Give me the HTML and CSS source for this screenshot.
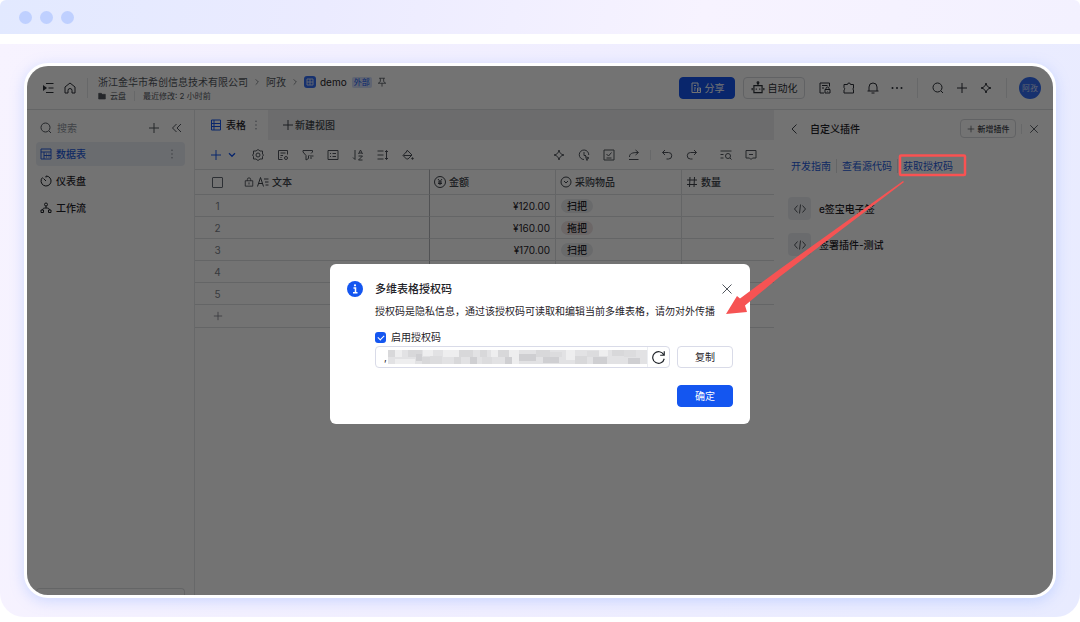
FILE: index.html
```html
<!DOCTYPE html>
<html lang="zh-CN">
<head>
    <meta charset="UTF-8">
    <meta name="viewport" content="width=device-width, initial-scale=1.0">
    <title>多维表格授权码</title>
    <link rel="stylesheet" href="styles.css">
</head>
<body>
    <!-- Icon set -->
    <svg class="sprite" aria-hidden="true">
        <symbol id="i-menu" viewBox="0 0 24 24"><path d="M8 3h15M13 12h10M8 21h15"/><path d="M2 6l8 6-8 6z" fill="currentColor" stroke="none"/></symbol>
        <symbol id="i-home" viewBox="0 0 24 24"><path d="M2 10l10-8 10 8v12h-6v-5a4 4 0 0 0-8 0v5H2z"/></symbol>
        <symbol id="i-right" viewBox="0 0 24 24"><path d="M8 4l8 8-8 8"/></symbol>
        <symbol id="i-left" viewBox="0 0 24 24"><path d="M17 3l-9 9 9 9"/></symbol>
        <symbol id="i-down" viewBox="0 0 24 24"><path d="M3 7l9 9 9-9" stroke-width="4"/></symbol>
        <symbol id="i-collapse" viewBox="0 0 24 24"><path d="M11 4l-8 8 8 8M20 4l-8 8 8 8"/></symbol>
        <symbol id="i-folder" viewBox="0 0 24 24"><path d="M2 4h8l3 3h9v14H2z" fill="currentColor"/></symbol>
        <symbol id="i-pin" viewBox="0 0 24 24"><path d="M5 3h14M8 3v8l-5 4h18l-5-4V3M12 15v8"/></symbol>
        <symbol id="i-share" viewBox="0 0 24 24"><path d="M15 21H4V2h12v7M8 7h4M8 12h4M8 16h3M15 12h6v9h-6zM15 16h6"/></symbol>
        <symbol id="i-robot" viewBox="0 0 24 24"><path d="M5 8h14v12H5zM12 3v5M2 12v4M22 12v4M9 13v2M15 13v2"/><circle cx="12" cy="3" r="1.500"/></symbol>
        <symbol id="i-doclock" viewBox="0 0 24 24"><path d="M10 22H2V2h19v7M6 7h11M6 12h4M12 15h10v7H12zM14 15v-2a3 3 0 0 1 6 0v2M17 18v1"/></symbol>
        <symbol id="i-puzzle" viewBox="0 0 24 24"><path d="M2 5h7a3 3 0 0 1 6 0h6v7a2.500 2.500 0 0 0 0 4v6H2v-6a3 3 0 0 0 0-5z"/></symbol>
        <symbol id="i-bell" viewBox="0 0 24 24"><path d="M4 18v-8a8 8 0 0 1 16 0v8M1 18h22M9 22h6"/></symbol>
        <symbol id="i-more" viewBox="0 0 24 24"><g fill="currentColor" stroke="none"><circle cx="3" cy="12" r="2"/><circle cx="12" cy="12" r="2"/><circle cx="21" cy="12" r="2"/></g></symbol>
        <symbol id="i-dots" viewBox="0 0 24 24"><g fill="currentColor" stroke="none"><circle cx="12" cy="3" r="2"/><circle cx="12" cy="12" r="2"/><circle cx="12" cy="21" r="2"/></g></symbol>
        <symbol id="i-search" viewBox="0 0 24 24"><circle cx="11" cy="11" r="9"/><path d="M18 18l4 4"/></symbol>
        <symbol id="i-plus" viewBox="0 0 24 24"><path d="M12 2v20M2 12h20"/></symbol>
        <symbol id="i-spark" viewBox="0 0 24 24"><path d="M12 2c1 6 4 9 10 10-6 1-9 4-10 10-1-6-4-9-10-10 6-1 9-4 10-10z"/></symbol>
        <symbol id="i-close" viewBox="0 0 24 24"><path d="M3 3l18 18M21 3L3 21"/></symbol>
        <symbol id="i-base" viewBox="0 0 24 24"><path d="M2 2h20v20H2zM2 8h20M8 8v14M8 15h14M12 12h2M17 12h2M12 18h2M17 18h2"/></symbol>
        <symbol id="i-table" viewBox="0 0 24 24"><path d="M3 2h18v20H3zM8 2v20M3 9h18M3 15h18"/></symbol>
        <symbol id="i-grid" viewBox="0 0 24 24"><path d="M3 3h18v18H3zM12 3v18M3 12h18" stroke-width="3"/></symbol>
        <symbol id="i-gauge" viewBox="0 0 24 24"><path d="M5 5a10 10 0 1 0 7-3v3M7 7l5 5"/></symbol>
        <symbol id="i-flow" viewBox="0 0 24 24"><circle cx="12" cy="5" r="3"/><path d="M12 8v4M5 16c0-3 2-4 7-4s7 1 7 4M2 16h5v5H2zM17 16h5v5h-5z"/></symbol>
        <symbol id="i-gear" viewBox="0 0 24 24"><path d="M12 1l4 3h5v6l2 2-2 3v5h-5l-4 3-4-3H3v-5l-2-3 2-2V4h5z" stroke-linejoin="round"/><circle cx="12" cy="12" r="4"/></symbol>
        <symbol id="i-form" viewBox="0 0 24 24"><path d="M11 21H3V3h18v8M7 8h10M7 13h5M7 17h2"/><circle cx="18" cy="18" r="3"/></symbol>
        <symbol id="i-filter" viewBox="0 0 24 24"><path d="M18 9l3-3V3H2v3l6 7v9l5-3v-5l2-2M16 14h7M16 18h4"/></symbol>
        <symbol id="i-group" viewBox="0 0 24 24"><path d="M2 3h20v18H2zM6 9h2M11 9h7M6 15h2M11 15h7"/></symbol>
        <symbol id="i-sort" viewBox="0 0 24 24"><path d="M6 2v19l-4-4M13 10l4-8 4 8M14 8h6M13 14h8l-8 8h8"/></symbol>
        <symbol id="i-height" viewBox="0 0 24 24"><path d="M1 4h12M1 12h12M1 20h12M19 3v18M16 6l3-3 3 3M16 18l3 3 3-3"/></symbol>
        <symbol id="i-fill" viewBox="0 0 24 24"><path d="M11 3l9 9-8 8H9l-7-7zM3 13h16M8 7l3-5"/><circle cx="21" cy="19" r="1.500" fill="currentColor"/></symbol>
        <symbol id="i-remind" viewBox="0 0 24 24"><path d="M12 21a9.500 9.500 0 1 1 9.500-9M12 6v7h4M15 15l7 3-3 1-1 4z"/></symbol>
        <symbol id="i-check" viewBox="0 0 24 24"><path d="M2 2h20v20H2zM7 10l4 4 6-7M7 18h10"/></symbol>
        <symbol id="i-export" viewBox="0 0 24 24"><path d="M3 16c0-7 5-9 17-9M15 2l6 5-6 5M2 21h19"/></symbol>
        <symbol id="i-undo" viewBox="0 0 24 24"><path d="M8 2L3 7l5 5M3 7h12a6.500 6.500 0 0 1 0 13h-4"/></symbol>
        <symbol id="i-redo" viewBox="0 0 24 24"><path d="M16 2l5 5-5 5M21 7H9a6.500 6.500 0 0 0 0 13h4"/></symbol>
        <symbol id="i-find" viewBox="0 0 24 24"><path d="M1 4h22M1 11h6M1 18h6M20 18l3 3"/><circle cx="16" cy="14" r="5"/></symbol>
        <symbol id="i-comment" viewBox="0 0 24 24"><path d="M2 3h20v15h-7l-3 3-3-3H2zM8 11h8"/></symbol>
        <symbol id="i-lock" viewBox="0 0 24 24"><path d="M3 9h18v13H3zM8 9V6a4 4 0 0 1 8 0v3M12 13v5"/></symbol>
        <symbol id="i-text" viewBox="0 0 24 24"><path d="M1 21L7 3l6 18M3 15h8M14 6h9M16 12h7M17 18h6"/></symbol>
        <symbol id="i-money" viewBox="0 0 24 24"><circle cx="12" cy="12" r="11"/><path d="M8 6l4 5 4-5M8 12h8M8 15h8M12 11v7"/></symbol>
        <symbol id="i-select" viewBox="0 0 24 24"><circle cx="12" cy="12" r="10"/><path d="M8 10l4 4 4-4"/></symbol>
        <symbol id="i-hash" viewBox="0 0 24 24"><path d="M2 8h20M2 17h20M8 2L7 22M17 2l-1 20"/></symbol>
        <symbol id="i-code" viewBox="0 0 24 24"><path d="M7 5l-6 7 6 7M17 5l6 7-6 7M13 3l-2 18"/></symbol>
        <symbol id="i-refresh" viewBox="0 0 24 24"><path d="M21 15a10 10 0 1 1-1-7M21 2v7h-7"/></symbol>
    </svg>

    <div class="browser-bar"><i></i><i></i><i></i></div>

    <main class="stage">
        <div class="window">
            <header class="topbar">
                <svg class="icon"><use href="#i-menu"/></svg>
                <svg class="icon"><use href="#i-home"/></svg>
                <span class="divider tall"></span>
                <div class="doc">
                    <div class="crumbs">
                        <span>浙江金华市希创信息技术有限公司</span>
                        <svg class="icon tiny"><use href="#i-right"/></svg>
                        <span>阿孜</span>
                        <svg class="icon tiny"><use href="#i-right"/></svg>
                        <span class="doc-name"><b class="doc-logo"><svg class="icon tiny"><use href="#i-grid"/></svg></b>demo</span>
                        <span class="badge">外部</span>
                        <svg class="icon small"><use href="#i-pin"/></svg>
                    </div>
                    <div class="meta">
                        <svg class="icon tiny"><use href="#i-folder"/></svg>
                        <span>云盘</span>
                        <span class="divider short"></span>
                        <span>最近修改: 2 小时前</span>
                    </div>
                </div>
                <div class="top-actions">
                    <button type="button" class="btn primary"><svg class="icon"><use href="#i-share"/></svg>分享</button>
                    <button type="button" class="btn auto"><svg class="icon big"><use href="#i-robot"/></svg>自动化</button>
                    <div class="icon-set">
                        <svg class="icon"><use href="#i-doclock"/></svg>
                        <svg class="icon"><use href="#i-puzzle"/></svg>
                        <svg class="icon"><use href="#i-bell"/></svg>
                        <svg class="icon"><use href="#i-more"/></svg>
                    </div>
                    <span class="divider tall"></span>
                    <div class="icon-set">
                        <svg class="icon"><use href="#i-search"/></svg>
                        <svg class="icon"><use href="#i-plus"/></svg>
                        <svg class="icon"><use href="#i-spark"/></svg>
                    </div>
                    <span class="divider tall"></span>
                    <span class="avatar">阿孜</span>
                </div>
            </header>

            <div class="workspace">
                <aside class="sidebar">
                    <div class="side-search">
                        <svg class="icon"><use href="#i-search"/></svg>
                        <input type="text" placeholder="搜索" aria-label="搜索">
                        <svg class="icon"><use href="#i-plus"/></svg>
                        <svg class="icon"><use href="#i-collapse"/></svg>
                    </div>
                    <nav>
                        <a href="#" class="active"><svg class="icon"><use href="#i-base"/></svg>数据表<svg class="icon small dots"><use href="#i-dots"/></svg></a>
                        <a href="#"><svg class="icon"><use href="#i-gauge"/></svg>仪表盘</a>
                        <a href="#"><svg class="icon"><use href="#i-flow"/></svg>工作流</a>
                    </nav>
                    <div class="side-footer"></div>
                </aside>

                <section class="sheet">
                    <div class="tabs">
                        <div class="tab"><svg class="icon blue"><use href="#i-table"/></svg>表格<svg class="icon small dots"><use href="#i-dots"/></svg></div>
                        <button type="button" class="new-view"><svg class="icon"><use href="#i-plus"/></svg>新建视图</button>
                    </div>
                    <div class="toolbar">
                        <div class="add-record">
                            <svg class="icon blue"><use href="#i-plus"/></svg>
                            <svg class="icon tiny blue"><use href="#i-down"/></svg>
                        </div>
                        <div class="tools">
                            <svg class="icon"><use href="#i-gear"/></svg>
                            <svg class="icon"><use href="#i-form"/></svg>
                            <svg class="icon"><use href="#i-filter"/></svg>
                            <svg class="icon"><use href="#i-group"/></svg>
                            <svg class="icon"><use href="#i-sort"/></svg>
                            <svg class="icon"><use href="#i-height"/></svg>
                            <svg class="icon"><use href="#i-fill"/></svg>
                        </div>
                        <div class="tools right">
                            <svg class="icon"><use href="#i-spark"/></svg>
                            <svg class="icon"><use href="#i-remind"/></svg>
                            <svg class="icon"><use href="#i-check"/></svg>
                            <svg class="icon"><use href="#i-export"/></svg>
                        </div>
                        <span class="divider short"></span>
                        <div class="tools">
                            <svg class="icon"><use href="#i-undo"/></svg>
                            <svg class="icon"><use href="#i-redo"/></svg>
                        </div>
                        <div class="tools last">
                            <svg class="icon"><use href="#i-find"/></svg>
                            <svg class="icon"><use href="#i-comment"/></svg>
                        </div>
                    </div>
                    <table>
                        <colgroup><col class="c-num"><col class="c-text"><col class="c-mid"><col class="c-mid"><col></colgroup>
                        <thead>
                            <tr>
                                <th class="num"><input type="checkbox" aria-label="全选"></th>
                                <th><div class="field"><svg class="icon small"><use href="#i-lock"/></svg><svg class="icon"><use href="#i-text"/></svg>文本</div></th>
                                <th><div class="field"><svg class="icon"><use href="#i-money"/></svg>金额</div></th>
                                <th><div class="field"><svg class="icon"><use href="#i-select"/></svg>采购物品</div></th>
                                <th><div class="field"><svg class="icon"><use href="#i-hash"/></svg>数量</div></th>
                            </tr>
                        </thead>
                        <tbody>
                            <tr><td class="num">1</td><td></td><td class="money">¥120.00</td><td><span class="tag">扫把</span></td><td></td></tr>
                            <tr><td class="num">2</td><td></td><td class="money">¥160.00</td><td><span class="tag pink">拖把</span></td><td></td></tr>
                            <tr><td class="num">3</td><td></td><td class="money">¥170.00</td><td><span class="tag">扫把</span></td><td></td></tr>
                            <tr><td class="num">4</td><td></td><td></td><td></td><td></td></tr>
                            <tr><td class="num">5</td><td></td><td></td><td></td><td></td></tr>
                            <tr class="add-row"><td class="num"><svg class="icon small"><use href="#i-plus"/></svg></td><td colspan="4"></td></tr>
                        </tbody>
                    </table>
                </section>

                <aside class="plugins">
                    <div class="plugins-head">
                        <svg class="icon"><use href="#i-left"/></svg>
                        <h2>自定义插件</h2>
                        <button type="button" class="btn mini"><svg class="icon tiny"><use href="#i-plus"/></svg>新增插件</button>
                        <span class="divider short"></span>
                        <svg class="icon small"><use href="#i-close"/></svg>
                    </div>
                    <div class="links">
                        <a href="#">开发指南</a><a href="#">查看源代码</a><a href="#">获取授权码</a>
                    </div>
                    <ul>
                        <li><span class="tile"><svg class="icon"><use href="#i-code"/></svg></span>e签宝电子签</li>
                        <li><span class="tile"><svg class="icon"><use href="#i-code"/></svg></span>签署插件-测试</li>
                    </ul>
                </aside>
            </div>

            <div class="mask">
                <div class="dialog" role="dialog" aria-labelledby="dialog-title">
                    <div class="dialog-head">
                        <svg class="info" viewBox="0 0 16 16"><circle cx="8" cy="8" r="8" fill="#1456f0"/><path d="M6.500 7h2v4.500M6 11.700h4.500" fill="none" stroke="#fff" stroke-width="1.500"/><circle cx="8" cy="4.300" r="1.100" fill="#fff"/></svg>
                        <h1 id="dialog-title">多维表格授权码</h1>
                        <button type="button" class="close" aria-label="关闭"><svg class="icon"><use href="#i-close"/></svg></button>
                    </div>
                    <div class="dialog-body">
                        <p>授权码是隐私信息，通过该授权码可读取和编辑当前多维表格，请勿对外传播</p>
                        <label class="enable"><input type="checkbox" checked>启用授权码</label>
                        <div class="code-row">
                            <div class="code-box">
                                <input type="text" value="," readonly aria-label="授权码">
                                <svg class="mosaic" viewBox="0 0 259 14" preserveAspectRatio="none" shape-rendering="crispEdges">
                                    <path fill="#e2e2e4" d="M0 0h259v14H0z"/>
                                    <path fill="#eeeeef" d="M7 0h7v7H7zM35 0h10v6H35zM55 0h16v7H55zM103 0h7v7h-7zM121 0h10v14h-10zM178 0h9v10h-9zM7 9h20v5H7zM211 0h9v6h-9z"/>
                                    <path fill="#d8d8da" d="M0 0h7v7H0zM20 0h14v7H20zM71 0h14v7H71zM92 0h7v7h-7zM34 7h14v7H34zM66 7h7v7h-7zM110 0h11v7h-11zM148 0h14v7h-14zM187 6h12v8h-12zM224 0h12v6h-12z"/>
                                    <path fill="#cfcfd2" d="M28 4h6v7h-6zM82 7h7v7h-7zM117 7h7v7h-7zM131 4h17v7h-17zM155 7h16v6h-16zM205 7h14v7h-14zM240 8h12v6h-12z"/>
                                    <path fill="#dcdcde" d="M42 6h12v8H42zM94 7h10v7H94zM199 1h12v6h-12zM236 0h12v7h-12zM162 2h12v5h-12z"/>
                                </svg>
                                <button type="button" class="refresh" aria-label="刷新"><svg class="icon big"><use href="#i-refresh"/></svg></button>
                            </div>
                            <button type="button" class="btn">复制</button>
                        </div>
                        <button type="button" class="btn primary confirm">确定</button>
                    </div>
                </div>
            </div>

            <!-- Callout: from the link to the dialog -->
            <svg class="callout" viewBox="0 0 250 170" aria-hidden="true">
                <rect x="180" y="5.500" width="65" height="19.500" rx="1" fill="none" stroke="#fa5252" stroke-width="2.500"/>
                <path d="M183 31 L60 119 L20 148.500 L17 146 L6 164 L27 162 L25 155.500 L60 126.500 L184 32z" fill="#f65353"/>
            </svg>
        </div>
    </main>
</body>
</html>
```
FILE: styles.css
```css
* {
    box-sizing: border-box;
}

body {
    margin: 0;
    min-height: 100vh;
    display: flex;
    flex-direction: column;
    gap: 10px;
    padding-bottom: 5px;
    background: #fff;
    color: #1f2329;
    font-family: Inter, "Noto Sans CJK SC", sans-serif;
    font-size: 10px;
    line-height: 14px;
}

.sprite {
    display: none;
}

button,
input {
    font: inherit;
    color: inherit;
}

button {
    padding: 0;
    border: none;
    background: none;
    cursor: pointer;
}

a {
    color: inherit;
    text-decoration: none;
}

h1,
h2,
p,
ul {
    margin: 0;
    padding: 0;
    list-style: none;
}

.icon {
    flex: none;
    width: 12px;
    height: 12px;
    fill: none;
    stroke: currentColor;
    stroke-width: 2;
}

.icon.big {
    width: 14px;
    height: 14px;
}

.icon.small {
    width: 10px;
    height: 10px;
}

.icon.tiny {
    width: 8px;
    height: 8px;
}

.blue {
    color: #1456f0;
}

.divider {
    flex: none;
    width: 1px;
    background: #e4e6e9;
}

.divider.tall {
    height: 20px;
}

.divider.short {
    height: 10px;
}

/* Page frame */
.browser-bar {
    display: flex;
    align-items: center;
    gap: 8px;
    height: 34px;
    padding: 0 19px;
    border-radius: 6px 6px 0 0;
    background: linear-gradient(100deg, #e2e9ff, #ebebff 30%, #f7f3ff 65%, #f3f1ff);
}

.browser-bar i {
    width: 13px;
    height: 13px;
    border-radius: 50%;
    background: #bfd0ff;
}

.stage {
    flex: 1;
    display: flex;
    padding: 19px 24px;
    border-radius: 0 0 24px 24px;
    background: linear-gradient(100deg, #f7f3ff, #f0eeff 50%, #e8ebff);
}

.window {
    position: relative;
    flex: 1;
    min-width: 0;
    display: flex;
    flex-direction: column;
    overflow: hidden;
    border: 3px solid #fff;
    border-radius: 24px;
    background: #fff;
    box-shadow: 0 3px 14px rgba(130, 165, 255, 0.35);
}

/* Top bar */
.topbar {
    display: flex;
    align-items: center;
    gap: 10px;
    height: 44px;
    padding: 0 12px 0 15px;
    border-bottom: 1px solid #dee0e3;
    color: #2b2f36;
}

.topbar > .divider {
    margin-left: 1px;
}

.doc {
    padding-top: 3px;
    color: #51565d;
}

.crumbs,
.meta,
.doc-name,
.top-actions,
.icon-set {
    display: flex;
    align-items: center;
}

.crumbs {
    gap: 5px;
}

.doc-name {
    gap: 4px;
    color: #1f2329;
}

.doc-logo {
    display: flex;
    padding: 2px;
    border-radius: 3px;
    background: #336df4;
    color: #d3defa;
}

.badge {
    padding: 0 2px;
    border-radius: 2px;
    background: #d3defa;
    color: #1456f0;
    font-size: 8px;
    line-height: 11px;
}

.meta {
    gap: 4px;
    font-size: 8px;
}

.meta .divider {
    margin: 0 4px;
}

.top-actions {
    gap: 14px;
    margin-left: auto;
}

.icon-set {
    gap: 12px;
}

.btn {
    display: flex;
    align-items: center;
    justify-content: center;
    gap: 3px;
    height: 22px;
    min-width: 56px;
    border: 1px solid #d8dade;
    border-radius: 4px;
}

.btn.primary {
    border-color: #1456f0;
    background: #1456f0;
    color: #fff;
}

.btn.auto {
    min-width: 62px;
    margin-left: -6px;
}

.avatar {
    width: 22px;
    border-radius: 50%;
    background: #336df4;
    color: #d3defa;
    font-size: 8px;
    line-height: 22px;
    text-align: center;
    margin-left: -2px;
}

/* Columns */
.workspace {
    flex: 1;
    display: flex;
}

.sidebar {
    width: 168px;
    display: flex;
    flex-direction: column;
    padding: 4px 9px 0;
    border-right: 1px solid #e4e6e9;
}

.side-search {
    display: flex;
    align-items: center;
    gap: 5px;
    height: 28px;
    padding: 0 2px 0 4px;
    color: #51565d;
}

.side-search input {
    flex: 1;
    min-width: 0;
    padding: 0;
    border: none;
    background: none;
}

.side-search input::placeholder {
    color: #8f959e;
}

.side-search .icon:last-child {
    margin-left: 6px;
}

.sidebar nav {
    display: flex;
    flex-direction: column;
    gap: 3px;
}

.sidebar nav a {
    display: flex;
    align-items: center;
    gap: 4px;
    height: 24px;
    padding: 0 8px 0 4px;
    border-radius: 4px;
    font-weight: 500;
}

.sidebar nav a.active {
    background: #eceff6;
    color: #245bdb;
}

.dots {
    margin-left: auto;
    color: #8f959e;
}

.side-footer {
    height: 7px;
    margin-top: auto;
    border: 1px solid #dee0e3;
    border-bottom: none;
    border-radius: 4px 4px 0 0;
}

.sheet {
    flex: 1;
    min-width: 0;
}

.tabs {
    display: flex;
    height: 30px;
    background: #eff0f1;
    font-weight: 500;
}

.tab {
    display: flex;
    align-items: center;
    gap: 4px;
    width: 73px;
    padding: 0 7px 0 15px;
    background: #fff;
    white-space: nowrap;
}

.new-view {
    display: flex;
    align-items: center;
    gap: 1px;
    margin-left: 14px;
    color: #40454c;
}

.toolbar {
    display: flex;
    align-items: center;
    gap: 10px;
    height: 29px;
    padding: 0 17px 0 15px;
    color: #51565d;
}

.add-record {
    display: flex;
    align-items: center;
    gap: 6px;
    margin-right: 6px;
}

.tools {
    display: flex;
    gap: 13px;
}

.tools.right {
    margin-left: auto;
}

.tools.last {
    margin-left: 12px;
}

/* Data table */
table {
    width: 100%;
    table-layout: fixed;
    border-collapse: separate;
    border-spacing: 0;
}

.c-num {
    width: 45px;
}

.c-text {
    width: 190px;
}

.c-mid {
    width: 126px;
}

th,
td {
    height: 22px;
    padding: 0 5px;
    border-bottom: 1px solid #dee0e3;
    border-right: 1px solid #dee0e3;
    text-align: left;
    font-weight: 400;
}

th {
    height: 26px;
    padding-left: 4px;
    border-top: 1px solid #dee0e3;
    font-weight: 500;
}

th:last-child,
td:last-child {
    border-right: none;
}

th:nth-child(2),
td:nth-child(2):not([colspan]) {
    border-right-color: #b4b7bb;
}

.num {
    border-right: none;
    color: #7d828a;
    text-align: center;
}

.num .icon {
    display: block;
    margin: 0 auto;
}

.add-row td {
    height: 23px;
}

th input {
    appearance: none;
    display: block;
    width: 11px;
    height: 11px;
    margin: 0 auto;
    border: 1px solid #646a73;
    border-radius: 1px;
}

.field {
    display: flex;
    align-items: center;
    gap: 3px;
    color: #40454c;
}

td.money {
    text-align: right;
}

.tag {
    display: inline-block;
    padding: 0 6px;
    border-radius: 7px;
    background: #e9ebee;
    font-weight: 500;
}

.tag.pink {
    background: #efe4e5;
}

/* Plugin panel */
.plugins {
    width: 279px;
    padding: 8px 14px 0;
}

.plugins-head {
    display: flex;
    align-items: center;
    height: 21px;
    gap: 5px;
    color: #40454c;
}

.plugins-head h2 {
    margin: 0 auto 0 5px;
    color: #1f2329;
    font-size: 10px;
    font-weight: 500;
}

.plugins-head > .small {
    margin-left: 2px;
}

.btn.mini {
    height: 19px;
    font-size: 8px;
    font-weight: 500;
}

.links {
    display: flex;
    padding: 20px 3px 0;
    color: #245bdb;
}

.links a + a {
    margin-left: 5px;
    padding-left: 5px;
    border-left: 1px solid #dee0e3;
}

.plugins li {
    display: flex;
    align-items: center;
    gap: 8px;
    margin-bottom: 13px;
    font-weight: 500;
}

.plugins ul {
    padding-top: 24px;
}

.tile {
    display: flex;
    align-items: center;
    justify-content: center;
    width: 23px;
    height: 23px;
    border-radius: 4px;
    background: #eceef2;
    color: #51565d;
}

/* Dialog */
.mask {
    position: absolute;
    inset: 0;
    display: flex;
    align-items: flex-start;
    justify-content: center;
    padding-top: 198px;
    background: rgba(0, 0, 0, 0.55);
}

.dialog {
    width: 420px;
    padding: 17px;
    border-radius: 6px;
    background: #fff;
}

.dialog-head {
    display: flex;
    align-items: center;
    gap: 12px;
    height: 16px;
}

.dialog-head h1 {
    flex: 1;
    font-size: 11px;
    font-weight: 500;
}

.info {
    width: 16px;
    height: 16px;
}

.close {
    display: flex;
    color: #51565d;
}

.dialog-body {
    padding-left: 28px;
}

.dialog-body p {
    margin: 7px 0 12px;
    white-space: nowrap;
}

.enable {
    display: flex;
    align-items: center;
    gap: 5px;
}

.enable input {
    appearance: none;
    position: relative;
    width: 11px;
    height: 11px;
    margin: 0;
    border-radius: 3px;
    background: #1456f0;
}

.enable input:checked::after {
    content: "";
    position: absolute;
    left: 3px;
    top: 3px;
    width: 5px;
    height: 3px;
    border: solid #fff;
    border-width: 0 0 1px 1px;
    transform: rotate(-45deg);
}

.code-row {
    display: flex;
    gap: 7px;
    margin-top: 2px;
}

.code-box {
    flex: 1;
    display: flex;
    align-items: center;
    height: 22px;
    padding-left: 8px;
    border: 1px solid #d9dbe8;
    border-radius: 4px;
}

.code-box input {
    width: 4px;
    padding: 0;
    border: none;
    outline: none;
}

.mosaic {
    flex: 1;
    min-width: 0;
    height: 14px;
}

.refresh {
    display: flex;
    align-items: center;
    justify-content: center;
    width: 22px;
    height: 20px;
    border-left: 1px solid #eceef2;
}

.code-row .btn {
    border-color: #d9dbe8;
}

.confirm {
    margin: 17px 0 0 auto;
}

/* Callout over the mask */
.callout {
    position: absolute;
    top: 84px;
    right: 83px;
    width: 250px;
    height: 170px;
    pointer-events: none;
}
```
